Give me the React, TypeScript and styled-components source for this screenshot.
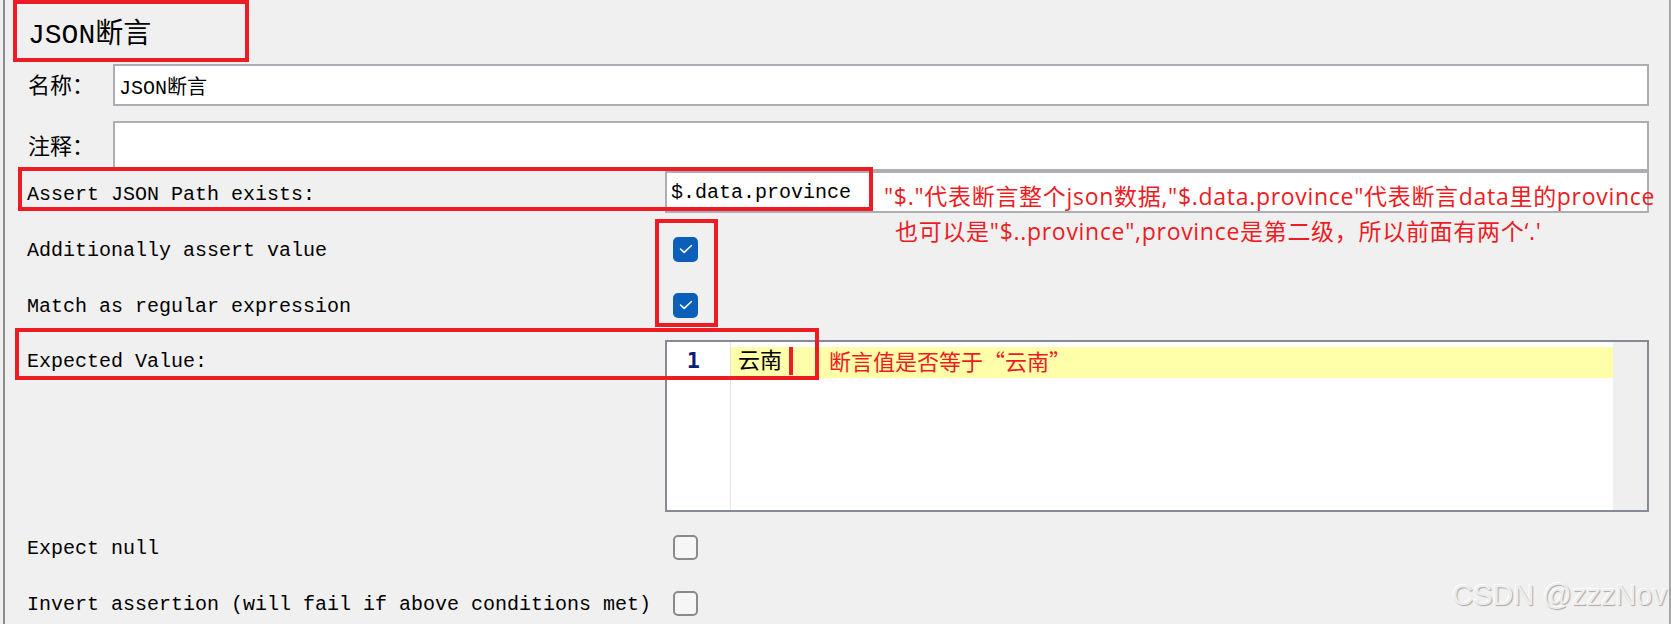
import React from 'react';
import styled, { createGlobalStyle } from 'styled-components';

const GlobalStyle = createGlobalStyle`
  body {
    margin: 0;
    background: #f0f0f0;
  }
`;

const MONO = `'Liberation Mono', 'Noto Sans CJK SC', monospace`;

const Page = styled.div`
  position: relative;
  width: 1671px;
  height: 624px;
  overflow: hidden;
  background: #f0f0f0;
  padding-left: 3px;
  box-sizing: border-box;
  font-family: ${MONO};
  color: #000;
`;

const Panel = styled.div`
  height: 100%;
  border-left: 2px solid #8c8c8c;
  border-right: 2px solid #a6a6a6;
`;

const Title = styled.div`
  height: 62px;
  display: flex;
  align-items: center;
  padding-left: 23px;
  font-size: 28px;
`;

const FieldRow = styled.div<{ $h: number; $gap: number }>`
  display: flex;
  align-items: center;
  height: ${(p) => p.$h}px;
  margin-top: ${(p) => p.$gap}px;
  padding: 0 20px 0 23px;
`;

const ShortLabel = styled.div`
  width: 85px;
  font-size: 22px;
  padding-bottom: 4px;
  flex-shrink: 0;
`;

const TextBox = styled.div`
  flex: 1;
  align-self: stretch;
  display: flex;
  align-items: center;
  box-sizing: border-box;
  border: 2px solid #adadb3;
  background: #fff;
  padding: 0 4px;
  font-size: 20px;
  white-space: nowrap;
`;

const FormRow = styled.div<{ $h: number; $gap?: number; $top?: boolean }>`
  display: flex;
  align-items: ${(p) => (p.$top ? 'flex-start' : 'center')};
  height: ${(p) => p.$h}px;
  margin-top: ${(p) => p.$gap ?? 0}px;
  padding-right: 20px;
`;

const Label = styled.div<{ $pad?: number }>`
  width: 638px;
  padding-left: 22px;
  padding-top: ${(p) => p.$pad ?? 4}px;
  flex-shrink: 0;
  font-size: 20px;
  line-height: 30px;
  white-space: nowrap;
`;

const Box = styled.div<{ $checked?: boolean }>`
  width: 25px;
  height: 25px;
  margin-left: 8px;
  box-sizing: border-box;
  border-radius: 5px;
  display: flex;
  align-items: center;
  justify-content: center;
  background: ${(p) => (p.$checked ? '#0c5fb9' : '#f6f6f6')};
  border: ${(p) => (p.$checked ? 'none' : '2px solid #8a8a8a')};
`;

const Editor = styled.div`
  flex: 1;
  align-self: stretch;
  display: flex;
  box-sizing: border-box;
  border: 2px solid #868a94;
  background: #fff;
`;

const Gutter = styled.div`
  width: 64px;
  border-right: 1px solid #e4e4e4;
  text-align: right;
  padding-right: 30px;
  box-sizing: border-box;
  font-family: 'DejaVu Sans Mono', monospace;
  font-weight: bold;
  font-size: 22px;
  color: #101c72;
  line-height: 31px;
  padding-top: 3px;
`;

const Code = styled.div`
  flex: 1;
  padding-top: 5px;
`;

const CodeLine = styled.div<{ $current?: boolean }>`
  height: 31px;
  background: ${(p) => (p.$current ? '#ffffaa' : 'transparent')};
  padding-left: 7px;
  font-size: 22px;
  line-height: 31px;
`;

const ScrollStrip = styled.div`
  width: 34px;
  background: #efefef;
`;

const RedBox = styled.div<{ $x: number; $y: number; $w: number; $h: number }>`
  position: absolute;
  left: ${(p) => p.$x}px;
  top: ${(p) => p.$y}px;
  width: ${(p) => p.$w}px;
  height: ${(p) => p.$h}px;
  box-sizing: border-box;
  border: 4px solid #ed1c24;
  pointer-events: none;
`;

const RedBar = styled.div`
  position: absolute;
  left: 789px;
  top: 347px;
  width: 4px;
  height: 28px;
  background: #ed1c24;
`;

const Note = styled.div<{ $x: number; $y: number; $latin?: boolean }>`
  position: absolute;
  left: ${(p) => p.$x}px;
  top: ${(p) => p.$y}px;
  font-family: ${(p) =>
    p.$latin
      ? `'Open Sans', 'Noto Sans CJK SC', sans-serif`
      : `'Noto Sans CJK SC', 'Noto Sans', sans-serif`};
  font-size: ${(p) => (p.$latin ? 23 : 22)}px;
  letter-spacing: ${(p) => (p.$latin ? 0.7 : 0)}px;
  line-height: 30px;
  color: #ed1c24;
  white-space: nowrap;
`;

const Watermark = styled.div`
  position: absolute;
  right: 4px;
  top: 581px;
  font-family: 'Liberation Sans', Arial, sans-serif;
  font-size: 29px;
  line-height: 29px;
  color: #ededed;
  text-shadow: 1px 1px 1px rgba(0, 0, 0, 0.3), -1px -1px 0 rgba(255, 255, 255, 0.9);
`;

const Check = () => (
  <svg width="14" height="10" viewBox="0 0 14 10">
    <polyline
      points="1.5,5 5.2,8.4 12.5,1.5"
      fill="none"
      stroke="#fff"
      strokeWidth="1.5"
      strokeLinecap="round"
      strokeLinejoin="round"
    />
  </svg>
);

const CheckBox: React.FC<{ checked?: boolean }> = ({ checked }) => (
  <Box $checked={checked}>{checked && <Check />}</Box>
);

const App: React.FC = () => {
  return (
    <>
      <GlobalStyle />
      <Page>
        <Panel>
          <Title>JSON断言</Title>

          <FieldRow $h={42} $gap={2}>
            <ShortLabel>名称：</ShortLabel>
            <TextBox>JSON断言</TextBox>
          </FieldRow>
          <FieldRow $h={50} $gap={15}>
            <ShortLabel>注释：</ShortLabel>
            <TextBox />
          </FieldRow>

          <FormRow $h={42}>
            <Label $pad={6}>Assert JSON Path exists:</Label>
            <TextBox>$.data.province</TextBox>
          </FormRow>
          <FormRow $h={56} $gap={8}>
            <Label>Additionally assert value</Label>
            <CheckBox checked />
          </FormRow>
          <FormRow $h={56}>
            <Label>Match as regular expression</Label>
            <CheckBox checked />
          </FormRow>
          <FormRow $h={172} $gap={7} $top>
            <Label $pad={7}>Expected Value:</Label>
            <Editor>
              <Gutter>1</Gutter>
              <Code>
                <CodeLine $current>云南</CodeLine>
              </Code>
              <ScrollStrip />
            </Editor>
          </FormRow>
          <FormRow $h={56} $gap={7}>
            <Label>Expect null</Label>
            <CheckBox />
          </FormRow>
          <FormRow $h={56}>
            <Label>Invert assertion (will fail if above conditions met)</Label>
            <CheckBox />
          </FormRow>
        </Panel>

        <RedBox $x={13} $y={0} $w={236} $h={62} />
        <RedBox $x={18} $y={167} $w={855} $h={44} />
        <RedBox $x={655} $y={219} $w={63} $h={108} />
        <RedBox $x={15} $y={328} $w={804} $h={52} />
        <RedBar />

        <Note $x={884} $y={181} $latin>
          "$."代表断言整个json数据,"$.data.province"代表断言data里的province
        </Note>
        <Note $x={895} $y={216} $latin>
          也可以是"$..province",province是第二级，所以前面有两个‘.'
        </Note>
        <Note $x={829} $y={345}>断言值是否等于“云南”</Note>

        <Watermark>CSDN @zzzNov</Watermark>
      </Page>
    </>
  );
};

export default App;
